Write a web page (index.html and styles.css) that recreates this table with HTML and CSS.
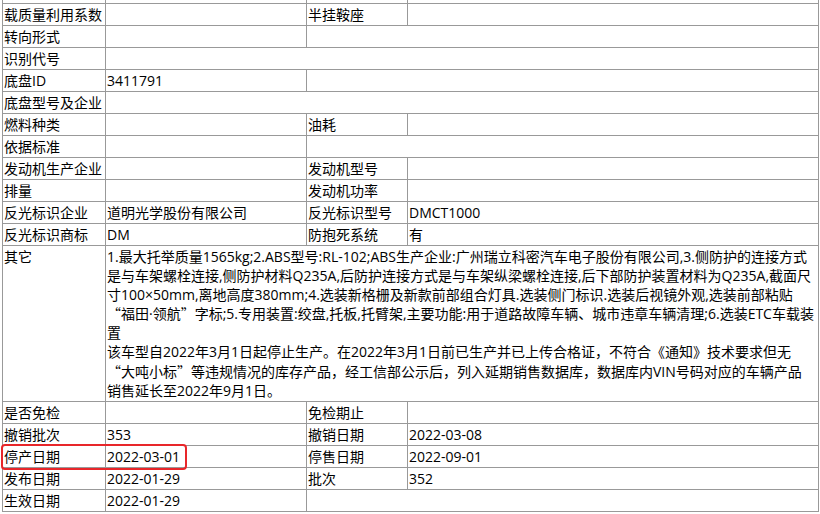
FILE: index.html
```html
<!DOCTYPE html>
<html lang="zh-CN">
  <head>
    <meta charset="UTF-8" />
    <meta name="viewport" content="width=device-width, initial-scale=1.0" />
    <title>车辆参数</title>
    <link rel="stylesheet" href="styles.css">
  </head>

  <body>
    <div class="page">
      <table class="spec">
        <colgroup>
          <col class="col-label" />
          <col class="col-value" />
          <col class="col-label2" />
          <col class="col-value2" />
        </colgroup>
        <!-- row scrolled out of view above -->
        <tr>
          <td></td>
          <td></td>
          <td></td>
          <td></td>
        </tr>
        <tr>
          <td>载质量利用系数</td>
          <td></td>
          <td>半挂鞍座</td>
          <td></td>
        </tr>
        <tr>
          <td>转向形式</td>
          <td></td>
          <td colspan="2"></td>
        </tr>
        <tr>
          <td>识别代号</td>
          <td colspan="3"></td>
        </tr>
        <tr>
          <td>底盘ID</td>
          <td>3411791</td>
          <td colspan="2"></td>
        </tr>
        <tr>
          <td>底盘型号及企业</td>
          <td colspan="3"></td>
        </tr>
        <tr>
          <td>燃料种类</td>
          <td></td>
          <td>油耗</td>
          <td></td>
        </tr>
        <tr>
          <td>依据标准</td>
          <td></td>
          <td colspan="2"></td>
        </tr>
        <tr>
          <td>发动机生产企业</td>
          <td></td>
          <td>发动机型号</td>
          <td></td>
        </tr>
        <tr>
          <td>排量</td>
          <td></td>
          <td>发动机功率</td>
          <td></td>
        </tr>
        <tr>
          <td>反光标识企业</td>
          <td>道明光学股份有限公司</td>
          <td>反光标识型号</td>
          <td>DMCT1000</td>
        </tr>
        <tr>
          <td>反光标识商标</td>
          <td>DM</td>
          <td>防抱死系统</td>
          <td>有</td>
        </tr>
        <tr>
          <td>其它</td>
          <td colspan="3" class="notes">1.最大托举质量1565kg;2.ABS型号:RL-102;ABS生产企业:广州瑞立科密汽车电子股份有限公司,3.侧防护的连接方式<br />是与车架螺栓连接,侧防护材料Q235A,后防护连接方式是与车架纵梁螺栓连接,后下部防护装置材料为Q235A,截面尺<br />寸100×50mm,离地高度380mm;4.选装新格栅及新款前部组合灯具.选装侧门标识.选装后视镜外观,选装前部粘贴<br /><span class="cjk">“</span>福田·领航<span class="cjk">”</span>字标;5.专用装置:绞盘,托板,托臂架,主要功能:用于道路故障车辆、城市违章车辆清理;6.选装ETC车载装<br />置<br />该车型自2022年3月1日起停止生产。在2022年3月1日前已生产并已上传合格证，不符合《通知》技术要求但无<br /><span class="cjk">“</span>大吨小标<span class="cjk">”</span>等违规情况的库存产品，经工信部公示后，列入延期销售数据库，数据库内VIN号码对应的车辆产品<br />销售延长至2022年9月1日。</td>
        </tr>
        <tr>
          <td>是否免检</td>
          <td></td>
          <td>免检期止</td>
          <td></td>
        </tr>
        <tr>
          <td>撤销批次</td>
          <td>353</td>
          <td>撤销日期</td>
          <td>2022-03-08</td>
        </tr>
        <tr>
          <td>停产日期</td>
          <td>2022-03-01</td>
          <td>停售日期</td>
          <td>2022-09-01</td>
        </tr>
        <tr>
          <td>发布日期</td>
          <td>2022-01-29</td>
          <td>批次</td>
          <td>352</td>
        </tr>
        <tr>
          <td>生效日期</td>
          <td>2022-01-29</td>
          <td colspan="2"></td>
        </tr>
      </table>

      <!-- highlight drawn over the 停产日期 row -->
      <div class="mark"></div>
    </div>
  </body>
</html>
```

FILE: styles.css
```css
body {
  margin: 0;
  background-color: #fff;
  font-family: "Open Sans", "Noto Sans CJK SC", sans-serif;
  font-size: 14px;
  color: #000;
}

.page {
  position: relative;
  display: flow-root;
  padding-left: 2px;
}

.spec {
  border-collapse: collapse;
  table-layout: fixed;
  width: 816px;
  margin-top: -19px;
}

.col-label {
  width: 103px;
}

.col-value {
  width: 201px;
}

.col-label2 {
  width: 101px;
}

.col-value2 {
  width: 411px;
}

.spec td {
  border: 1px solid #999;
  padding: 1px 1px;
  height: 19px;
  line-height: 19px;
  vertical-align: top;
  white-space: nowrap;
  overflow: hidden;
}

.spec td.notes {
  line-height: 19.1px;
}

.cjk {
  font-family: "Noto Sans CJK SC", sans-serif;
}

.mark {
  position: absolute;
  left: 1px;
  top: 444px;
  width: 186px;
  height: 26px;
  box-sizing: border-box;
  border: 2px solid #e8262a;
  border-radius: 4px;
}
```
